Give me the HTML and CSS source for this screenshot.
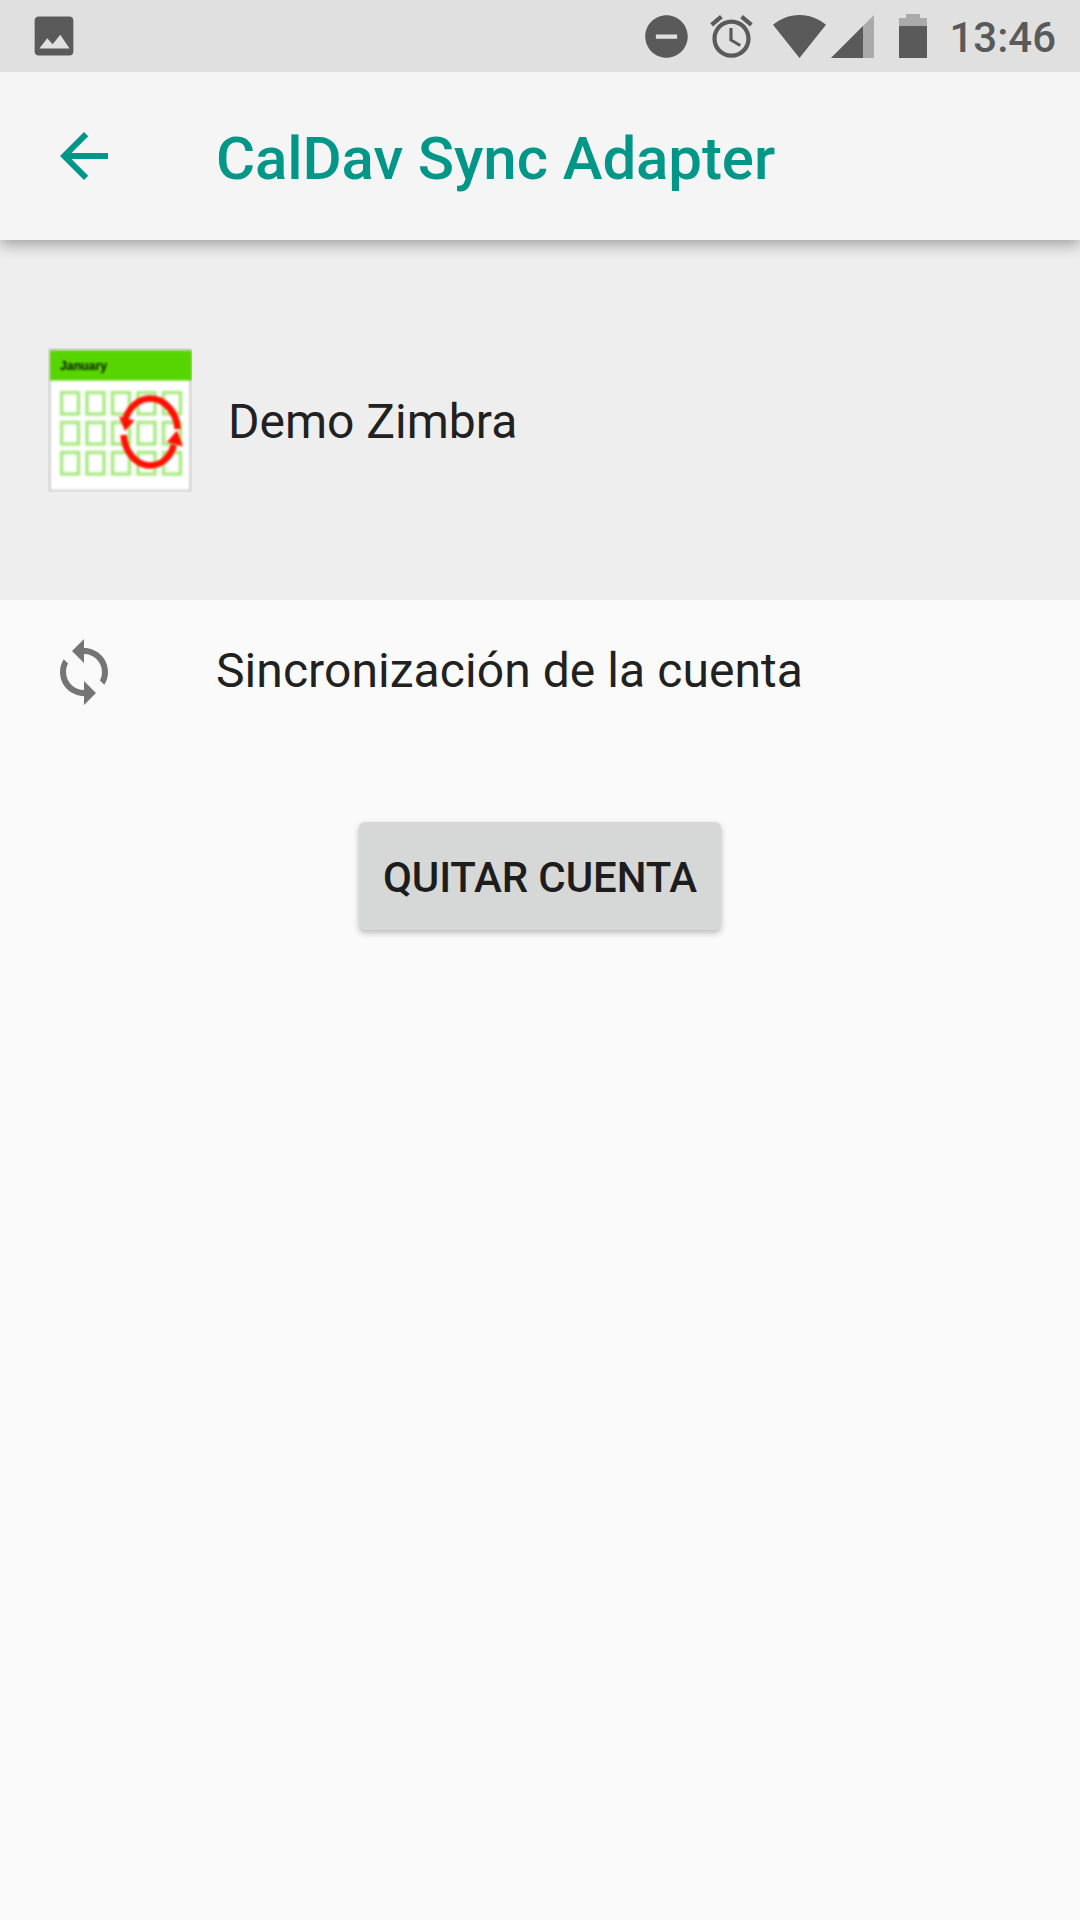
FILE: index.html
```
<!DOCTYPE html>
<html lang="es">
  <head>
    <meta charset="utf-8">
    <title>CalDav Sync Adapter</title>
    <link rel="stylesheet" href="styles.css">
  </head>
  <body>
    <div class="statusbar">
      <svg class="photo" width="54" height="54" viewBox="0 0 24 24"><path d="M20.600 19V5c0-1-.8-1.700-1.700-1.700H5.100c-1 0-1.700.8-1.700 1.700v14c0 1 .8 1.700 1.700 1.700h13.800c1 0 1.700-.8 1.700-1.700zM9 13l2.400 2.700L14.800 11.400l4.100 6.100H5.500z"/></svg>
      <div class="indicators">
        <svg class="dnd" width="51" height="51" viewBox="0 0 24 24"><path d="M12 2C6.480 2 2 6.480 2 12s4.480 10 10 10 10-4.480 10-10S17.520 2 12 2zm5 11H7v-2h10v2z"/></svg>
        <svg class="alarm" width="51" height="51" viewBox="0 0 24 24"><path d="M22 5.720l-4.600-3.860-1.290 1.530 4.600 3.860L22 5.720zM7.880 3.390L6.600 1.860 2 5.710l1.290 1.530 4.590-3.850zM12.500 8H11v6l4.750 2.850.75-1.230-4-2.370V8zM12 4c-4.970 0-9 4.030-9 9s4.020 9 9 9c4.970 0 9-4.030 9-9s-4.030-9-9-9zm0 16c-3.870 0-7-3.130-7-7s3.130-7 7-7 7 3.130 7 7-3.130 7-7 7z"/></svg>
        <svg class="wifi" width="53" height="43" viewBox="0 0 53 43"><path d="M26.500 43L0 9.700C7 4 16 0 26.500 0S46 4 53 9.700z"/></svg>
        <svg class="signal" width="43" height="43" viewBox="0 0 43 43"><path class="dim" d="M0 43L43 0v43z"/><path d="M0 43L32 11v32z"/></svg>
        <svg class="battery" width="28" height="44" viewBox="0 0 28 44"><path class="dim" d="M0 4h7V0h14v4h7v8H0z"/><path d="M0 12h28v32H0z"/></svg>
        <span class="clock">13:46</span>
      </div>
    </div>

    <div class="toolbar">
      <svg class="back" width="72" height="72" viewBox="0 0 24 24"><path d="M20 11H7.830l5.590-5.590L12 4l-8 8 8 8 1.410-1.410L7.830 13H20v-2z"/></svg>
      <h1>CalDav Sync Adapter</h1>
    </div>

    <div class="account">
      <svg class="calendar" width="144" height="144" viewBox="0 0 144 144">
        <defs>
          <pattern id="days" x="11.500" y="42.500" width="25.500" height="30" patternUnits="userSpaceOnUse">
            <rect class="day" x="2" y="2" width="17" height="21.500"/>
          </pattern>
        </defs>
        <g class="soft">
          <rect class="edge" x="0" y="0" width="144" height="144"/>
          <rect class="paper" x="3" y="3" width="138" height="138.500"/>
          <rect class="month" x="2" y="2.500" width="142" height="30"/>
          <text x="12" y="22" textLength="47" lengthAdjust="spacingAndGlyphs">January</text>
          <rect x="11.500" y="42.500" width="124" height="87" fill="url(#days)"/>
          <path class="arc" d="M77 72C81 59 91 50.500 102 50.500C117 50.500 129 65 129.500 81"/>
          <path class="arc" d="M75.500 87C77 104 88 117.500 102 117.500C113 117.500 122 110 126 97"/>
          <path class="head" d="M71 68.500L86.500 72.500 77 83zM129 82.500L135 98.500 119 94z"/>
        </g>
      </svg>
      <span>Demo Zimbra</span>
    </div>

    <div class="row">
      <svg class="sync" width="72" height="72" viewBox="0 0 24 24"><path d="M12 4V1L8 5l4 4V6c3.310 0 6 2.690 6 6 0 1.010-.25 1.970-.7 2.800l1.460 1.460C19.540 15.030 20 13.570 20 12c0-4.420-3.580-8-8-8zm0 14c-3.310 0-6-2.690-6-6 0-1.010.25-1.970.7-2.800L5.240 7.740C4.460 8.970 4 10.430 4 12c0 4.420 3.580 8 8 8v3l4-4-4-4v3z"/></svg>
      <span>Sincronización de la cuenta</span>
    </div>

    <button class="remove" type="button">QUITAR CUENTA</button>
  </body>
</html>
```

FILE: styles.css
```
body {
  margin: 0;
  min-height: 1920px;
  display: flex;
  flex-direction: column;
  background: #fafafa;
  color: #212121;
  font-family: Roboto, sans-serif;
  font-size: 48px;
}
svg {
  display: block;
  flex: none;
}

/* status bar, kept above the toolbar shadow */
.statusbar {
  position: relative;
  z-index: 1;
  height: 72px;
  display: flex;
  align-items: center;
  justify-content: space-between;
  box-sizing: border-box;
  padding: 0 24px 0 27px;
  background: #e0e0e0;
  color: #5a5a5a;
  fill: #5a5a5a;
}
.indicators {
  display: flex;
  align-items: center;
}
.alarm {
  margin-left: 14px;
}
.wifi {
  margin-left: 16px;
}
.signal {
  margin-left: 5px;
}
.battery {
  margin-left: 25px;
}
.dim {
  fill: #aaa;
}
.clock {
  margin-left: 22px;
  padding-top: 3px;
  font-size: 42px;
  font-weight: 500;
  line-height: 69px;
}

/* toolbar */
.toolbar {
  position: relative;
  height: 168px;
  display: flex;
  align-items: center;
  box-sizing: border-box;
  padding-left: 48px;
  background: #f5f5f5;
  box-shadow: 0 5px 14px rgba(0, 0, 0, 0.32);
}
.back {
  fill: #009688;
}
.toolbar h1 {
  margin: 4px 0 0 96px;
  color: #009688;
  font-size: 60px;
  font-weight: 500;
  letter-spacing: -0.1px;
}

/* account header */
.account {
  height: 360px;
  display: flex;
  align-items: center;
  box-sizing: border-box;
  padding-left: 48px;
  background: #eee;
}
.account span {
  margin: 3px 0 0 36px;
}
.soft {
  filter: blur(0.8px);
}
.edge {
  fill: #d6d6d6;
}
.paper {
  fill: #fff;
}
.month {
  fill: #57d500;
}
.calendar text {
  font: bold 13px "Liberation Sans", sans-serif;
  fill: #061500;
}
.day {
  fill: none;
  stroke: #abea85;
  stroke-width: 3.5;
}
.arc {
  fill: none;
  stroke: #ff1000;
  stroke-width: 6.5;
}
.head {
  fill: #ff1000;
}

/* sync row */
.row {
  height: 144px;
  display: flex;
  align-items: center;
  padding-left: 48px;
}
.row span {
  margin: -3px 0 0 96px;
  letter-spacing: 0.07px;
}
.sync {
  fill: #757575;
}

.remove {
  align-self: center;
  width: 362px;
  height: 108px;
  margin-top: 78px;
  padding: 2px 0 0;
  border: 0;
  border-radius: 6px;
  background: #d6d8d7;
  box-shadow: 0 3px 6px rgba(0, 0, 0, 0.26);
  color: #1d1d1d;
  font: 500 42px Roboto, sans-serif;
  letter-spacing: -0.1px;
}
```
